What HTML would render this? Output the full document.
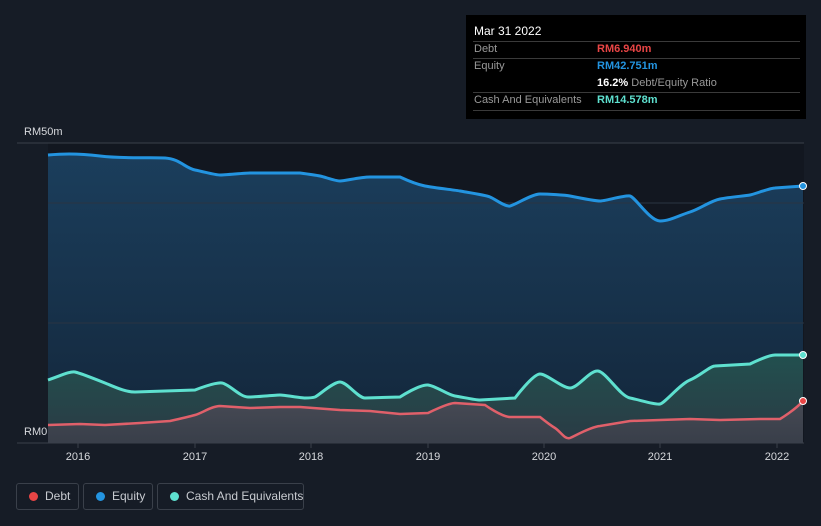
<!DOCTYPE html><html style="height:526px;overflow:hidden"><head><style>
body{margin:0;width:821px;height:526px;background:#161c26;font-family:"Liberation Sans",sans-serif;overflow:hidden;position:relative}
.tt{position:absolute;left:466px;top:15px;width:340px;height:104px;background:#000;font-size:11px}
.tt div{position:absolute;white-space:nowrap}
.lg{position:absolute;top:483px;height:27px;border:1px solid #3a404a;border-radius:3px;color:#c8cbd0;font-size:12px;line-height:25px;box-sizing:border-box;white-space:nowrap}
.lg i{position:absolute;top:8px;left:12px;width:9px;height:9px;border-radius:50%}
</style></head><body>
<svg width="821" height="526" style="position:absolute;left:0;top:0">
<defs>
<linearGradient id="ge" x1="0" y1="0" x2="0" y2="1"><stop offset="0" stop-color="#1b3e5c"/><stop offset="1" stop-color="#13263a"/></linearGradient>
<linearGradient id="gc" x1="0" y1="0" x2="0" y2="1"><stop offset="0" stop-color="#22504f"/><stop offset="1" stop-color="#2a3a44"/></linearGradient>
<linearGradient id="gd" x1="0" y1="0" x2="0" y2="1"><stop offset="0" stop-color="#4a4a55"/><stop offset="1" stop-color="#3a3f4a"/></linearGradient>
</defs>
<rect x="48" y="143" width="756" height="300" fill="#121720"/>
<path d="M48,155 C60,154 75,153 100,156 S150,157 165,158 S185,168 195,170 S215,175 220,175 S245,173 250,173 L300,173 S315,175 320,176 S335,181 340,181 S360,177 370,177 L400,177 S415,184 425,186 S455,190 460,191 S485,195 490,197 S505,207 510,206 S532,194 540,194 S565,195 570,196 S595,201 600,201 S625,195 630,196 S650,221 660,221 S680,215 690,212 S710,201 720,199 S745,196 750,195 S770,188 775,188 L803,186 L803,443 L48,443Z" fill="url(#ge)"/>
<path d="M48,380 C60,376 70,371 75,372 S95,379 105,383 S125,392 135,392 L165,391 L195,390 S215,382 222,383 S240,397 248,397 S275,395 280,395 S300,398 305,398 S312,398 315,397 S333,382 340,382 S358,398 365,398 L400,397 S420,384 428,385 S448,395 455,396 S475,400 480,400 L515,398 S533,374 540,374 S562,388 570,388 S590,370 598,371 S620,396 630,398 S655,405 660,404 S680,384 690,380 S710,366 715,366 L750,364 S768,355 775,355 L803,355 L803,443 L48,443Z" fill="url(#gc)"/>
<path d="M48,425 L80,424 L105,425 L140,423 L170,421 S188,417 195,415 S212,406 220,406 L250,408 L280,407 L300,407 L340,410 L370,411 L400,414 L428,413 S448,403 455,403 L485,405 S502,417 510,417 L540,417 S550,425 555,428 S565,440 570,438 S590,427 600,426 L630,421 L660,420 L690,419 L720,420 L760,419 L780,419 S795,410 803,401 L803,443 L48,443Z" fill="url(#gd)" opacity=".9"/>
<line x1="17" y1="143" x2="804" y2="143" stroke="#3a404a"/>
<line x1="48" y1="203" x2="804" y2="203" stroke="#2a3442"/>
<line x1="48" y1="323" x2="804" y2="323" stroke="#2a3442"/>
<line x1="17" y1="443" x2="804" y2="443" stroke="#3a404a"/>
<path d="M48,155 C60,154 75,153 100,156 S150,157 165,158 S185,168 195,170 S215,175 220,175 S245,173 250,173 L300,173 S315,175 320,176 S335,181 340,181 S360,177 370,177 L400,177 S415,184 425,186 S455,190 460,191 S485,195 490,197 S505,207 510,206 S532,194 540,194 S565,195 570,196 S595,201 600,201 S625,195 630,196 S650,221 660,221 S680,215 690,212 S710,201 720,199 S745,196 750,195 S770,188 775,188 L803,186" fill="none" stroke="#2394e0" stroke-width="3"/>
<path d="M48,380 C60,376 70,371 75,372 S95,379 105,383 S125,392 135,392 L165,391 L195,390 S215,382 222,383 S240,397 248,397 S275,395 280,395 S300,398 305,398 S312,398 315,397 S333,382 340,382 S358,398 365,398 L400,397 S420,384 428,385 S448,395 455,396 S475,400 480,400 L515,398 S533,374 540,374 S562,388 570,388 S590,370 598,371 S620,396 630,398 S655,405 660,404 S680,384 690,380 S710,366 715,366 L750,364 S768,355 775,355 L803,355" fill="none" stroke="#5ee0cf" stroke-width="3"/>
<path d="M48,425 L80,424 L105,425 L140,423 L170,421 S188,417 195,415 S212,406 220,406 L250,408 L280,407 L300,407 L340,410 L370,411 L400,414 L428,413 S448,403 455,403 L485,405 S502,417 510,417 L540,417 S550,425 555,428 S565,440 570,438 S590,427 600,426 L630,421 L660,420 L690,419 L720,420 L760,419 L780,419 S795,410 803,401" fill="none" stroke="#e0606a" stroke-width="2.5"/>
<circle cx="803" cy="186" r="3.5" fill="#2394e0" stroke="#fff" stroke-width="1"/>
<circle cx="803" cy="355" r="3.5" fill="#5ee0cf" stroke="#fff" stroke-width="1"/>
<circle cx="803" cy="401" r="3.5" fill="#e84545" stroke="#fff" stroke-width="1"/>
<g stroke="#3a404a"><line x1="78" y1="443" x2="78" y2="448"/><line x1="195" y1="443" x2="195" y2="448"/><line x1="311" y1="443" x2="311" y2="448"/><line x1="428" y1="443" x2="428" y2="448"/><line x1="544" y1="443" x2="544" y2="448"/><line x1="660" y1="443" x2="660" y2="448"/><line x1="777" y1="443" x2="777" y2="448"/></g>
<g fill="#d6d8dc" font-size="11" text-anchor="middle" font-family="Liberation Sans"><text x="78" y="460">2016</text><text x="195" y="460">2017</text><text x="311" y="460">2018</text><text x="428" y="460">2019</text><text x="544" y="460">2020</text><text x="660" y="460">2021</text><text x="777" y="460">2022</text></g>
<rect x="17" y="423" width="30" height="19" fill="#161c26"/>
<text x="24" y="135" fill="#d6d8dc" font-size="11" font-family="Liberation Sans">RM50m</text>
<text x="24" y="435" fill="#d6d8dc" font-size="11" font-family="Liberation Sans">RM0</text>
</svg>
<div class="tt">
<div style="left:8px;top:9px;color:#fff;font-size:12px">Mar 31 2022</div>
<div style="left:7px;top:26px;width:327px;border-top:1px solid #3a3a3a"></div>
<div style="left:8px;top:28px;color:#999">Debt</div><div style="left:131px;top:28px;color:#e84545;font-weight:bold">RM6.940m</div>
<div style="left:7px;top:43px;width:327px;border-top:1px solid #3a3a3a"></div>
<div style="left:8px;top:45px;color:#999">Equity</div><div style="left:131px;top:45px;color:#2394e0;font-weight:bold">RM42.751m</div>
<div style="left:131px;top:62px;color:#999"><b style="color:#fff">16.2%</b> Debt/Equity Ratio</div>
<div style="left:7px;top:77px;width:327px;border-top:1px solid #3a3a3a"></div>
<div style="left:8px;top:79px;color:#999">Cash And Equivalents</div><div style="left:131px;top:79px;color:#5ee0cf;font-weight:bold">RM14.578m</div>
<div style="left:7px;top:95px;width:327px;border-top:1px solid #3a3a3a"></div>
</div>
<div class="lg" style="left:16px;width:63px"><i style="background:#e84545"></i><span style="position:absolute;left:28px">Debt</span></div>
<div class="lg" style="left:83px;width:70px"><i style="background:#2394e0"></i><span style="position:absolute;left:28px">Equity</span></div>
<div class="lg" style="left:157px;width:147px"><i style="background:#5ee0cf"></i><span style="position:absolute;left:28px">Cash And Equivalents</span></div>
</body></html>
